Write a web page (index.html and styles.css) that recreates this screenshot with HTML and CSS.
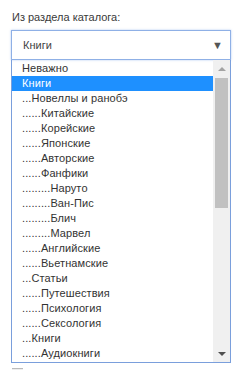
FILE: index.html
```html
<!DOCTYPE html>
<html lang="ru">
<head>
  <meta charset="UTF-8">
  <meta name="viewport" content="width=device-width, initial-scale=1.0">
  <title>Каталог</title>
  <link rel="stylesheet" href="styles.css">
</head>
<body>
  <div class="field">
    <label class="field-label">Из раздела каталога:</label>
    <div class="select-box">
      <span class="select-value">Книги</span>
      <span class="select-arrow">&#9660;</span>
    </div>
    <div class="dropdown">
      <ul class="options">
        <li>Неважно</li>
        <li class="selected">Книги</li>
        <li>...Новеллы и ранобэ</li>
        <li>......Китайские</li>
        <li>......Корейские</li>
        <li>......Японские</li>
        <li>......Авторские</li>
        <li>......Фанфики</li>
        <li>.........Наруто</li>
        <li>.........Ван-Пис</li>
        <li>.........Блич</li>
        <li>.........Марвел</li>
        <li>......Английские</li>
        <li>......Вьетнамские</li>
        <li>...Статьи</li>
        <li>......Путешествия</li>
        <li>......Психология</li>
        <li>......Сексология</li>
        <li>...Книги</li>
        <li>......Аудиокниги</li>
      </ul>
      <div class="scrollbar">
        <span class="scroll-btn up"></span>
        <div class="scroll-track">
          <div class="scroll-thumb"></div>
        </div>
        <span class="scroll-btn down"></span>
      </div>
    </div>
    <div class="checkbox-peek"></div>
  </div>
</body>
</html>
```

FILE: styles.css
```css
body {
  margin: 0;
  background-color: #fff;
  font-family: "Liberation Sans", Arial, sans-serif;
  font-size: 11px;
  color: #333;
}

.field {
  padding: 10px 11px 0 11px;
  width: 220px;
}

.field-label {
  display: block;
  height: 20px;
  line-height: 14px;
  padding-left: 1px;
  color: #3a3a3a;
}

.select-box {
  display: flex;
  align-items: center;
  justify-content: space-between;
  height: 28px;
  border: 1px solid #8fb0e6;
  box-shadow: 0 0 2px rgba(100, 150, 230, 0.5);
  padding: 0 7px 0 11px;
  background-color: #fff;
}

.select-value {
  color: #444;
}

.select-arrow {
  font-size: 11px;
  color: #555;
}

.dropdown {
  display: flex;
  height: 302px;
  border: 1px solid #7a9fdc;
  border-top: none;
  width: 218px;
  overflow: hidden;
}

.options {
  list-style: none;
  margin: 0;
  padding: 1px 0 0 0;
  flex: 1;
}

.options li {
  height: 15px;
  line-height: 15px;
  padding-left: 10px;
  white-space: nowrap;
  letter-spacing: 0.1px;
  color: #333;
}

.options li.selected {
  background-color: #1e90ff;
  color: #fff;
}

.scrollbar {
  display: flex;
  flex-direction: column;
  width: 17px;
  background-color: #f0f0f0;
}

.scroll-btn {
  display: flex;
  justify-content: center;
  align-items: center;
  height: 17px;
}

.scroll-btn.up::before {
  content: "";
  border-left: 4px solid transparent;
  border-right: 4px solid transparent;
  border-bottom: 4px solid #a3a3a3;
}

.scroll-btn.down::before {
  content: "";
  border-left: 4px solid transparent;
  border-right: 4px solid transparent;
  border-top: 4px solid #505050;
}

.scroll-track {
  flex: 1;
  padding: 1px 2px;
}

.scroll-thumb {
  height: 130px;
  background-color: #c1c1c1;
}

.checkbox-peek {
  width: 11px;
  height: 3px;
  margin: 5px 0 0 1px;
  border-top: 1px solid #bbb;
  background-color: #eee;
}
```
